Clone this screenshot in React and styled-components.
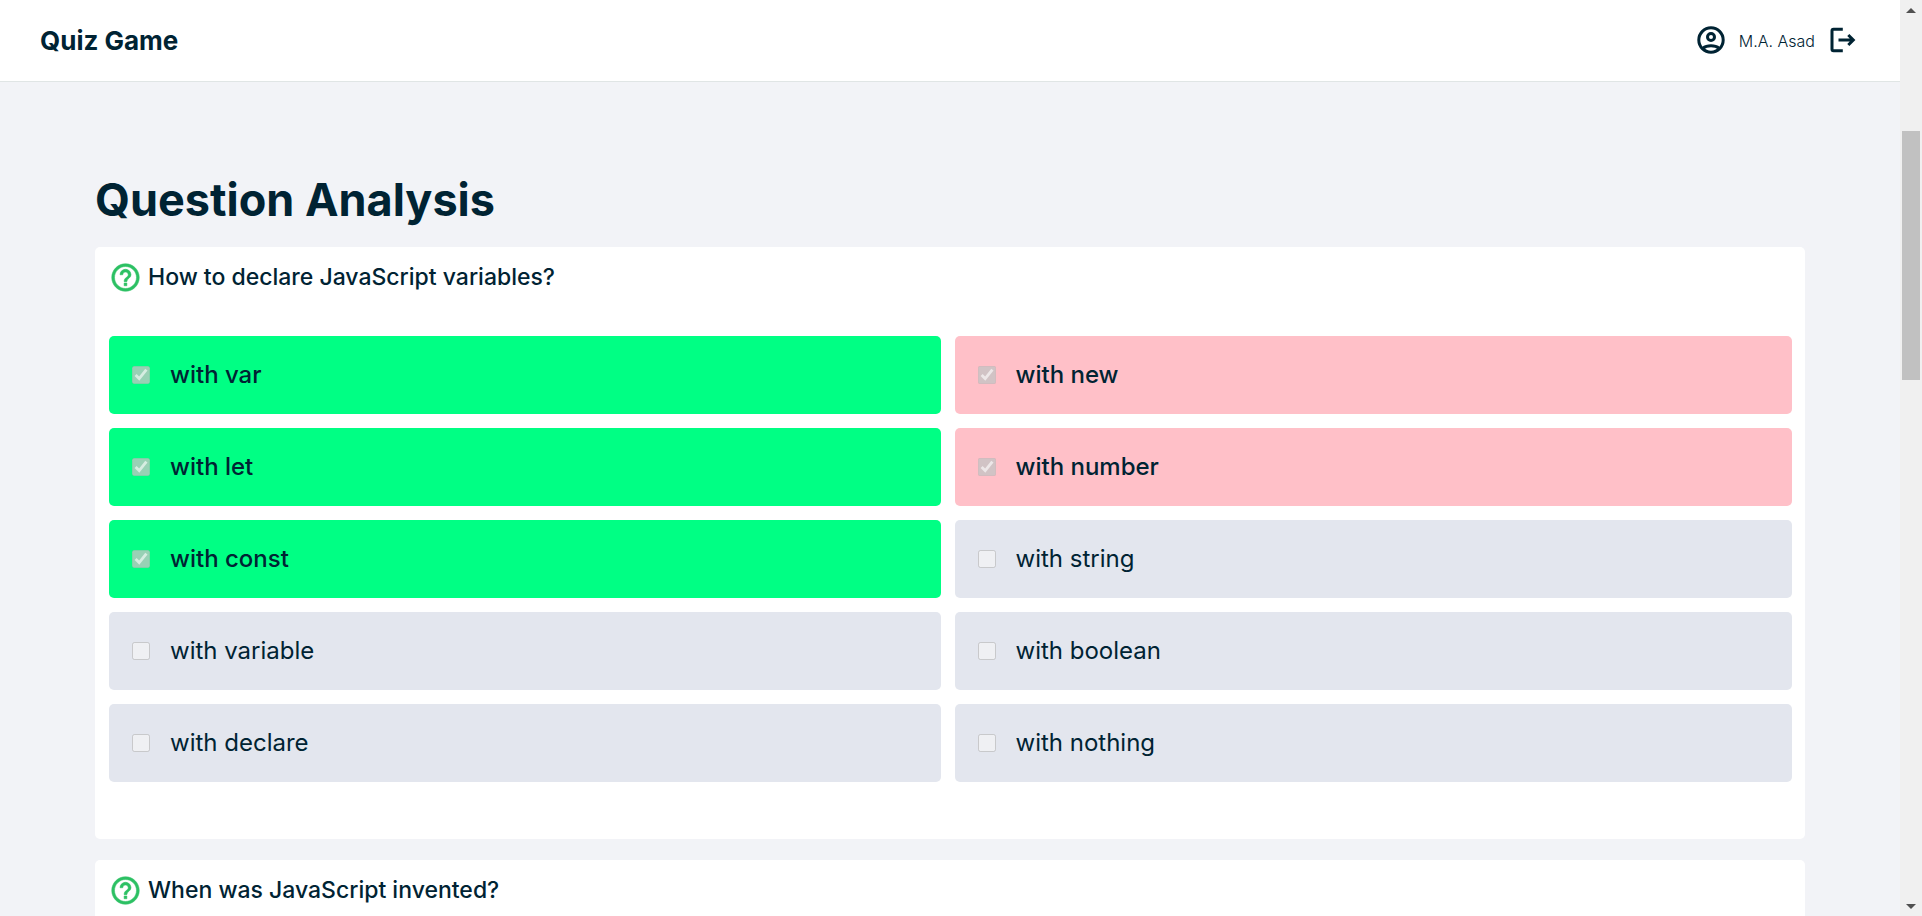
import React from "react";
import styled, { createGlobalStyle } from "styled-components";
import { MdHelpOutline } from "react-icons/md";

const GlobalStyle = createGlobalStyle`
  * { box-sizing: border-box; margin: 0; }
  body {
    background: #f2f3f7;
    color: #002333;
    font-family: Inter, "Open Sans", sans-serif;
  }
`;

const Shell = styled.div`
  display: grid;
  grid-template-columns: minmax(0, 1fr) 22px;
  height: 100vh;
`;

const Page = styled.div`
  overflow: auto;
  scrollbar-width: none;
`;

const Header = styled.header`
  display: flex;
  align-items: center;
  justify-content: space-between;
  height: 82px;
  padding: 0 40px;
  background: #ffffff;
  border-bottom: 1px solid #e0e5e5;
`;

const Brand = styled.a`
  color: inherit;
  font-size: 26px;
  font-weight: 700;
  line-height: 32px;
  text-decoration: none;
`;

const Account = styled.div`
  display: flex;
  align-items: center;
  gap: 11px;
`;

const UserName = styled.span`
  font-size: 16px;
  font-weight: 300;
  line-height: 24px;
`;

const IconButton = styled.button`
  padding: 0;
  border: 0;
  background: none;
  color: inherit;
  cursor: pointer;
`;

const LineIcon = styled.svg`
  display: block;
  width: 34px;
  height: 34px;
  fill: none;
  stroke: currentColor;
  stroke-width: 3;
`;

const Main = styled.main`
  padding: 90px 5% 0;
`;

const Title = styled.h1`
  margin-bottom: 19px;
  font-size: 45px;
  font-weight: 700;
  line-height: 56px;
`;

const Card = styled.section`
  margin-bottom: 21px;
  padding: 13px 13px 57px 14px;
  border-radius: 5px;
  background: #ffffff;
`;

const Question = styled.div`
  display: flex;
  align-items: center;
  gap: 6px;
  margin-bottom: 42px;
`;

const HelpIcon = styled(MdHelpOutline)`
  color: #2cc063;
  stroke-width: 0.4;

  path[fill="none"] {
    stroke: none;
  }
`;

const QuestionText = styled.h2`
  font-size: 23px;
  font-weight: 500;
  line-height: 34px;
`;

const Options = styled.div`
  display: grid;
  grid-template-columns: calc(50% - 10px) 1fr;
  gap: 14px;
`;

const fills = { correct: "#00ff84", wrong: "#ffc0c8", plain: "#e3e6ee" };

const Option = styled.label`
  display: flex;
  align-items: center;
  gap: 20px;
  height: 78px;
  padding: 0 23px;
  border-radius: 5px;
  background: ${({ $state }) => fills[$state]};
  font-size: 24px;
  font-weight: ${({ $state }) => ($state === "plain" ? 400 : 500)};
  line-height: 28px;
`;

const Checkbox = styled.input`
  flex: none;
  width: 18px;
  height: 18px;
  margin: 0;
`;

const Scrollbar = styled.div`
  display: grid;
  grid-template-rows: 20px 111fr 249fr 516fr 20px;
  justify-items: center;
  align-items: center;
  background: #f0f0f0;
`;

const Thumb = styled.div`
  grid-row: 3;
  width: 18px;
  height: 100%;
  background: #c1c1c1;
`;

const Arrow = styled.svg`
  grid-row: ${({ $row }) => $row};
  fill: #505050;
`;

const questions = [
  {
    text: "How to declare JavaScript variables?",
    options: [
      ["with var", "correct"],
      ["with new", "wrong"],
      ["with let", "correct"],
      ["with number", "wrong"],
      ["with const", "correct"],
      ["with string", "plain"],
      ["with variable", "plain"],
      ["with boolean", "plain"],
      ["with declare", "plain"],
      ["with nothing", "plain"],
    ],
  },
  { text: "When was JavaScript invented?", options: [] },
];

const AccountIcon = () => (
  <LineIcon viewBox="0 0 34 34" aria-hidden="true">
    <circle cx="17" cy="16" r="12.2" />
    <circle cx="17" cy="13" r="3.5" />
    <path d="M8.8 24.3 C13 20.9 21 20.9 25.2 24.3" />
  </LineIcon>
);

const LogoutIcon = () => (
  <LineIcon viewBox="0 0 34 34" aria-hidden="true">
    <path d="M16.8 5.3 H7.5 Q6 5.3 6 6.8 V25.2 Q6 26.7 7.5 26.7 H16.8 M12.5 16 H27 M22.3 11 L27.3 16 L22.3 21" />
  </LineIcon>
);

export default function App() {
  return (
    <>
      <GlobalStyle />
      <Shell>
        <Page>
          <Header>
            <Brand href="#">Quiz Game</Brand>
            <Account>
              <AccountIcon />
              <UserName>M.A. Asad</UserName>
              <IconButton type="button" aria-label="Log out">
                <LogoutIcon />
              </IconButton>
            </Account>
          </Header>
          <Main>
            <Title>Question Analysis</Title>
            {questions.map((q) => (
              <Card key={q.text}>
                <Question>
                  <HelpIcon size={33} />
                  <QuestionText>{q.text}</QuestionText>
                </Question>
                <Options>
                  {q.options.map(([text, state]) => (
                    <Option key={text} $state={state}>
                      <Checkbox type="checkbox" disabled defaultChecked={state !== "plain"} />
                      {text}
                    </Option>
                  ))}
                </Options>
              </Card>
            ))}
          </Main>
        </Page>
        <Scrollbar aria-hidden="true">
          <Arrow $row={1} width="10" height="5" viewBox="0 0 10 5">
            <path d="M0 5 L5 0 L10 5 Z" />
          </Arrow>
          <Thumb />
          <Arrow $row={5} width="10" height="5" viewBox="0 0 10 5">
            <path d="M0 0 L5 5 L10 0 Z" />
          </Arrow>
        </Scrollbar>
      </Shell>
    </>
  );
}
